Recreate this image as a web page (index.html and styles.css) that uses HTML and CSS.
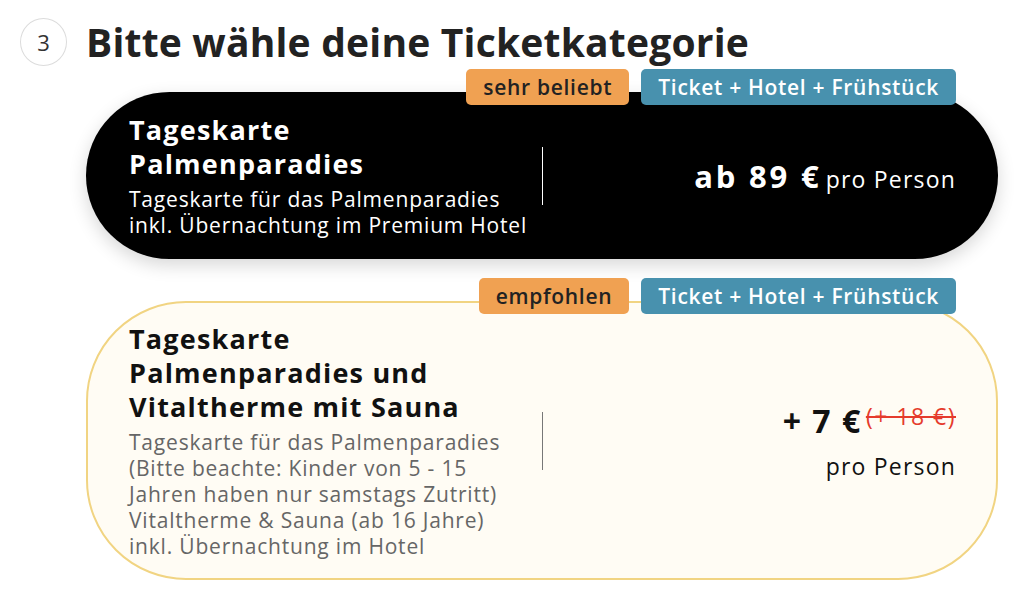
FILE: index.html
```html
<!DOCTYPE html>
<html lang="de">
<head>
<meta charset="utf-8">
<title>Ticketkategorie</title>
<link rel="stylesheet" href="styles.css">
</head>
<body>
<section class="step">
  <div class="step-num">3</div>
  <h1 class="step-title">Bitte wähle deine Ticketkategorie</h1>
  <div class="cards">
    <div class="card card-dark">
      <div class="badges">
        <span class="badge badge-orange">sehr beliebt</span>
        <span class="badge badge-blue">Ticket + Hotel + Frühstück</span>
      </div>
      <div class="card-info">
        <h2 class="card-title">Tageskarte<br>Palmenparadies</h2>
        <p class="card-desc">Tageskarte für das Palmenparadies<br>inkl. Übernachtung im Premium Hotel</p>
      </div>
      <div class="divider"></div>
      <div class="card-price">
        <p class="price-line"><span class="price">ab 89 €</span> <span class="per">pro Person</span></p>
      </div>
    </div>
    <div class="card card-light">
      <div class="badges">
        <span class="badge badge-orange">empfohlen</span>
        <span class="badge badge-blue">Ticket + Hotel + Frühstück</span>
      </div>
      <div class="card-info">
        <h2 class="card-title">Tageskarte<br>Palmenparadies und<br>Vitaltherme mit Sauna</h2>
        <p class="card-desc">Tageskarte für das Palmenparadies<br>(Bitte beachte: Kinder von 5 - 15<br>Jahren haben nur samstags Zutritt)<br>Vitaltherme &amp; Sauna (ab 16 Jahre)<br>inkl. Übernachtung im Hotel</p>
      </div>
      <div class="divider"></div>
      <div class="card-price">
        <p class="price-line"><span class="price price-lg">+ 7 €</span> <s class="old-price">(+ 18 €)</s></p>
        <p class="per per-block">pro Person</p>
      </div>
    </div>
  </div>
</section>
</body>
</html>
```
FILE: styles.css
```css
* { box-sizing: border-box; }
html, body { margin: 0; padding: 0; background: #fff; }
body {
  font-family: "Open Sans", "Noto Sans", sans-serif;
  color: #222;
}
.step {
  display: grid;
  grid-template-columns: 47px 1fr;
  column-gap: 19px;
  row-gap: 26px;
  padding: 18px 26px 0 20px;
}
.step-num {
  width: 47px;
  height: 48px;
  border: 1.5px solid #dcdcdc;
  border-radius: 50%;
  display: flex;
  align-items: center;
  justify-content: center;
  font-size: 22px;
  color: #333;
}
.step-title {
  margin: 0;
  font-size: 39px;
  line-height: 48px;
  font-weight: 700;
  color: #222;
  letter-spacing: 0.2px;
}
.cards {
  grid-column: 2;
  display: flex;
  flex-direction: column;
  gap: 42px;
}
.card {
  position: relative;
  display: grid;
  grid-template-columns: 1fr 1px 1fr;
  align-items: center;
  border-radius: 100px;
  border: 2px solid transparent;
  padding: 19px 40px 19px 41px;
}
.card-dark {
  background: #000;
  color: #fff;
  box-shadow: 0 6px 18px rgba(0, 0, 0, 0.16);
}
.card-light {
  background: #fffcf4;
  border-color: #f1d482;
  color: #111;
}
.badges {
  position: absolute;
  top: -25px;
  right: 40px;
  display: flex;
  gap: 12px;
}
.badge {
  height: 36px;
  line-height: 36px;
  padding: 0 17px;
  border-radius: 5px;
  font-size: 21px;
  font-weight: 600;
  letter-spacing: 0.7px;
}
.badge-orange { background: #f0a152; color: #222; }
.badge-blue { background: #4891ae; color: #fff; }
.card-title {
  margin: 0;
  font-size: 27px;
  line-height: 34px;
  font-weight: 700;
  letter-spacing: 1.2px;
}
.card-desc {
  margin: 5px 0 0;
  font-size: 21px;
  line-height: 26px;
  font-weight: 400;
  letter-spacing: 0.8px;
}
.card-light .card-desc { color: #666; }
.divider {
  width: 1px;
  height: 58px;
  background: #fff;
}
.card-light .divider { background: #777; }
.card-price {
  display: flex;
  flex-direction: column;
  align-items: flex-end;
  text-align: right;
}
.price-line { margin: 0; white-space: nowrap; }
.price {
  font-size: 31px;
  font-weight: 700;
  letter-spacing: 2.8px;
}
.price-lg { font-size: 32px; letter-spacing: 1.5px; }
.per {
  font-size: 23px;
  font-weight: 400;
  letter-spacing: 1.2px;
}
.per-block { margin: 8px 0 0; }
.old-price {
  color: #e53b2c;
  font-size: 23px;
  font-weight: 500;
  letter-spacing: 1.5px;
  vertical-align: 8px;
  text-decoration-thickness: 2px;
}
```
